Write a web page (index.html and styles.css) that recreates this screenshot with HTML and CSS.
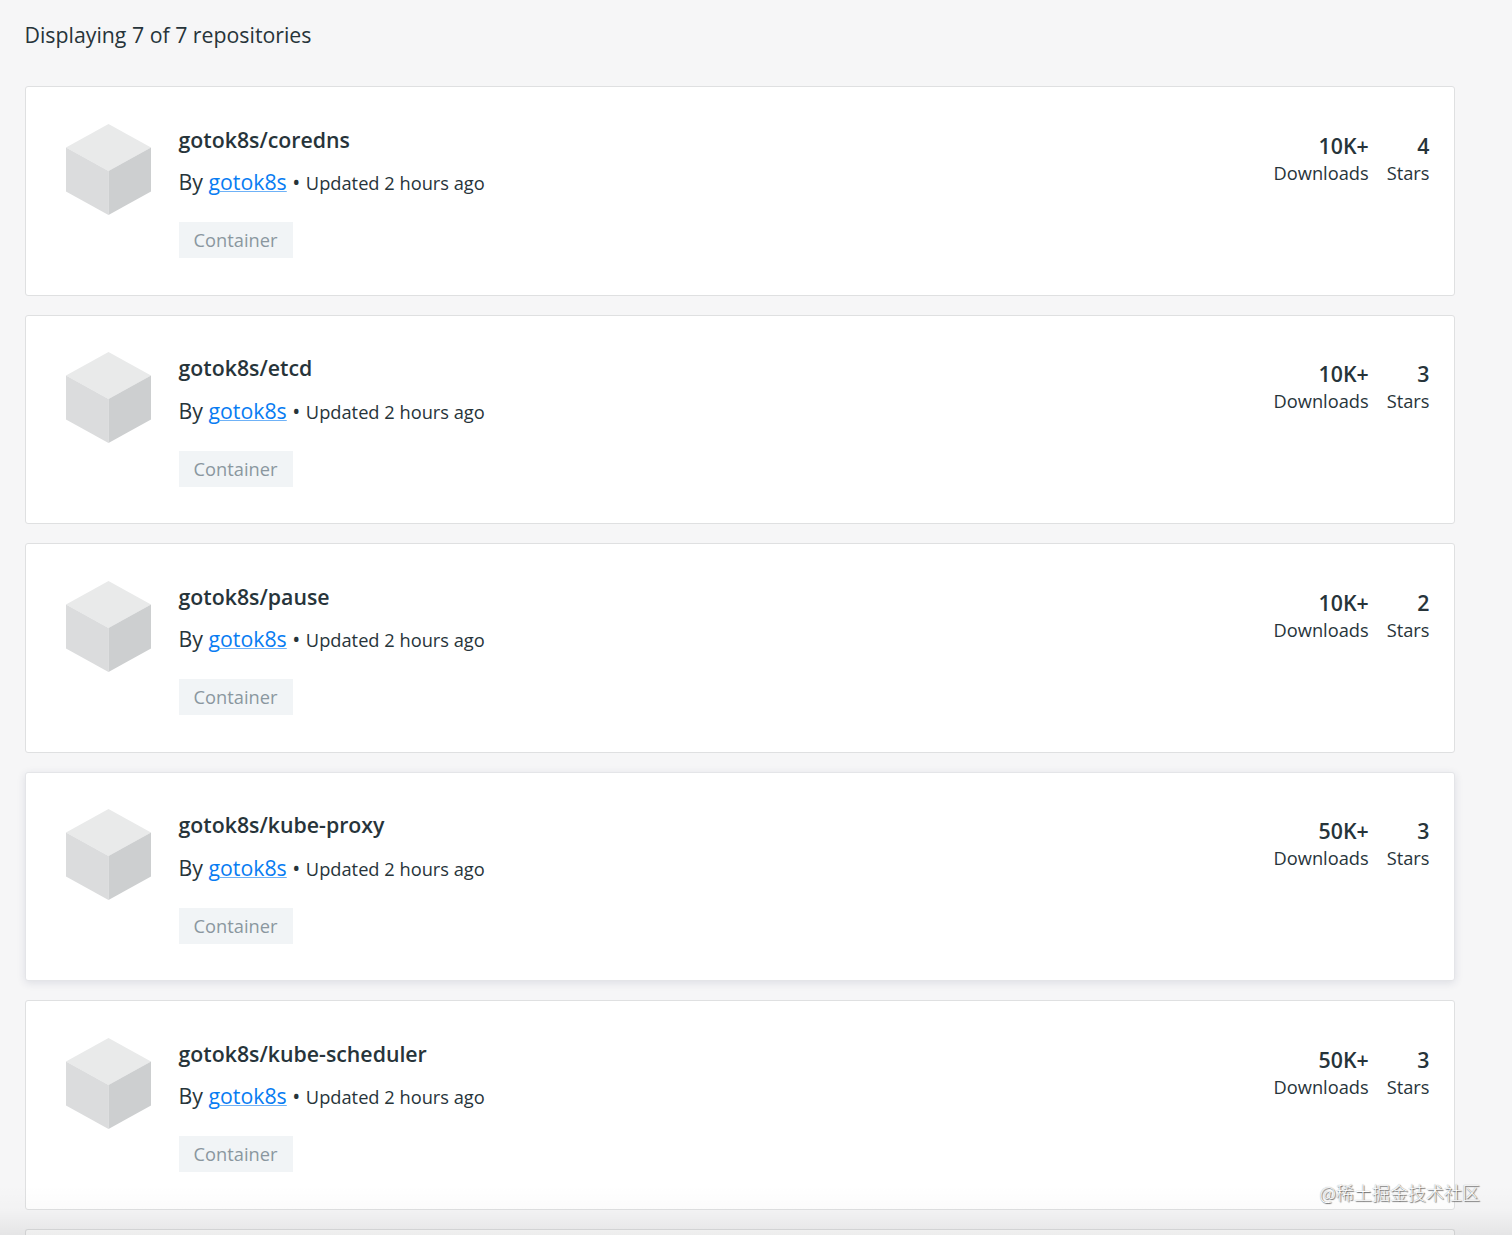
FILE: index.html
```
<!DOCTYPE html>
<html lang="en">
<head>
    <meta charset="UTF-8">
    <meta name="viewport" content="width=device-width, initial-scale=1.0">
    <title>Repositories</title>
    <link rel="stylesheet" href="styles.css">
</head>
<body>
    <svg class="sprite" width="0" height="0">
        <symbol id="cube" viewBox="0 0 85 91">
            <path d="M42.5 0L85 23.5L42.5 47L0 23.5z" fill="#e9eaea"/>
            <path d="M0 23.5L42.5 47V91L0 67.5z" fill="#dbdcdd"/>
            <path d="M85 23.5L42.5 47V91L85 67.5z" fill="#cdcfd0"/>
        </symbol>
    </svg>

    <main class="results">
        <p class="summary">Displaying 7 of 7 repositories</p>

        <div class="repo-list">
            <div class="repo-card">
                <svg class="repo-logo"><use href="#cube"/></svg>
                <div class="repo-info">
                    <h2>gotok8s/coredns</h2>
                    <p class="meta">By <a href="#">gotok8s</a> • <span class="updated">Updated 2 hours ago</span></p>
                    <span class="tag">Container</span>
                </div>
                <div class="stats">
                    <div class="stat"><strong>10K+</strong><span>Downloads</span></div>
                    <div class="stat"><strong>4</strong><span>Stars</span></div>
                </div>
            </div>

            <div class="repo-card">
                <svg class="repo-logo"><use href="#cube"/></svg>
                <div class="repo-info">
                    <h2>gotok8s/etcd</h2>
                    <p class="meta">By <a href="#">gotok8s</a> • <span class="updated">Updated 2 hours ago</span></p>
                    <span class="tag">Container</span>
                </div>
                <div class="stats">
                    <div class="stat"><strong>10K+</strong><span>Downloads</span></div>
                    <div class="stat"><strong>3</strong><span>Stars</span></div>
                </div>
            </div>

            <div class="repo-card">
                <svg class="repo-logo"><use href="#cube"/></svg>
                <div class="repo-info">
                    <h2>gotok8s/pause</h2>
                    <p class="meta">By <a href="#">gotok8s</a> • <span class="updated">Updated 2 hours ago</span></p>
                    <span class="tag">Container</span>
                </div>
                <div class="stats">
                    <div class="stat"><strong>10K+</strong><span>Downloads</span></div>
                    <div class="stat"><strong>2</strong><span>Stars</span></div>
                </div>
            </div>

            <div class="repo-card active">
                <svg class="repo-logo"><use href="#cube"/></svg>
                <div class="repo-info">
                    <h2>gotok8s/kube-proxy</h2>
                    <p class="meta">By <a href="#">gotok8s</a> • <span class="updated">Updated 2 hours ago</span></p>
                    <span class="tag">Container</span>
                </div>
                <div class="stats">
                    <div class="stat"><strong>50K+</strong><span>Downloads</span></div>
                    <div class="stat"><strong>3</strong><span>Stars</span></div>
                </div>
            </div>

            <div class="repo-card">
                <svg class="repo-logo"><use href="#cube"/></svg>
                <div class="repo-info">
                    <h2>gotok8s/kube-scheduler</h2>
                    <p class="meta">By <a href="#">gotok8s</a> • <span class="updated">Updated 2 hours ago</span></p>
                    <span class="tag">Container</span>
                </div>
                <div class="stats">
                    <div class="stat"><strong>50K+</strong><span>Downloads</span></div>
                    <div class="stat"><strong>3</strong><span>Stars</span></div>
                </div>
            </div>

            <div class="repo-card cut-off"></div>
        </div>
    </main>

    <div class="bottom-fade"></div>
    <div class="watermark" lang="zh">@稀土掘金技术社区</div>
</body>
</html>
```
FILE: styles.css
```
* {
    margin: 0;
    padding: 0;
    box-sizing: border-box;
}

body {
    position: relative;
    height: 100vh;
    overflow: hidden;
    font-family: "Open Sans", sans-serif;
    font-size: 21.3px;
    color: #27343a;
    background-color: #f6f6f7;
}

.sprite {
    position: absolute;
}

.results {
    display: flex;
    flex-direction: column;
    height: 100vh;
    padding: 20px 57px 0 24.5px;
}

.summary {
    height: 66px;
    line-height: 30px;
}

.repo-list {
    display: flex;
    flex: 1;
    flex-direction: column;
    gap: 19px;
    min-height: 0;
}

.repo-card {
    display: flex;
    height: 209.5px;
    flex-shrink: 0;
    padding: 36.5px 24.5px 0 40px;
    background-color: #fff;
    border: 1px solid #dfe0e1;
    border-radius: 3px;
}

.repo-card.active {
    border-color: #e4e5e8;
    box-shadow: 0 2px 8px rgba(40, 50, 90, 0.12);
}

/* next card, only its top edge is in view */
.repo-card.cut-off {
    flex: 1;
    height: auto;
    min-height: 0;
    padding: 0;
    border-bottom: none;
    border-radius: 3px 3px 0 0;
}

.repo-logo {
    width: 85px;
    height: 91px;
    margin-right: 28px;
}

.repo-info {
    flex: 1;
}

.repo-info h2 {
    font-size: 21.3px;
    font-weight: 600;
    line-height: 32px;
}

.meta {
    margin-top: 10.5px;
    line-height: 32px;
}

.meta a {
    color: #087cf2;
    text-decoration: underline;
    text-decoration-color: #6fb2f7;
    text-decoration-thickness: 1px;
}

.updated {
    font-size: 18.25px;
}

.tag {
    display: block;
    width: 114px;
    height: 36px;
    margin-top: 23px;
    font-size: 18.25px;
    line-height: 36px;
    text-align: center;
    color: #8a979f;
    background-color: #f1f4f6;
}

.stats {
    display: flex;
    gap: 18px;
    padding-top: 8px;
    text-align: right;
}

.stat strong {
    display: block;
    font-size: 21.3px;
    font-weight: 600;
    line-height: 28px;
}

.stat span {
    display: block;
    font-size: 18.25px;
    line-height: 26px;
}

.bottom-fade {
    position: absolute;
    left: 0;
    right: 0;
    bottom: 0;
    height: 50px;
    background: linear-gradient(rgba(0, 0, 0, 0), rgba(0, 0, 0, 0.015) 50%, rgba(0, 0, 0, 0.07));
}

.watermark {
    position: absolute;
    right: 32px;
    bottom: 29px;
    font-family: "Noto Sans CJK SC", sans-serif;
    font-size: 18px;
    font-weight: 300;
    line-height: 28px;
    color: #fff;
    text-shadow: 1px 1px 1px #666, 0 0 1px #888;
}
```
